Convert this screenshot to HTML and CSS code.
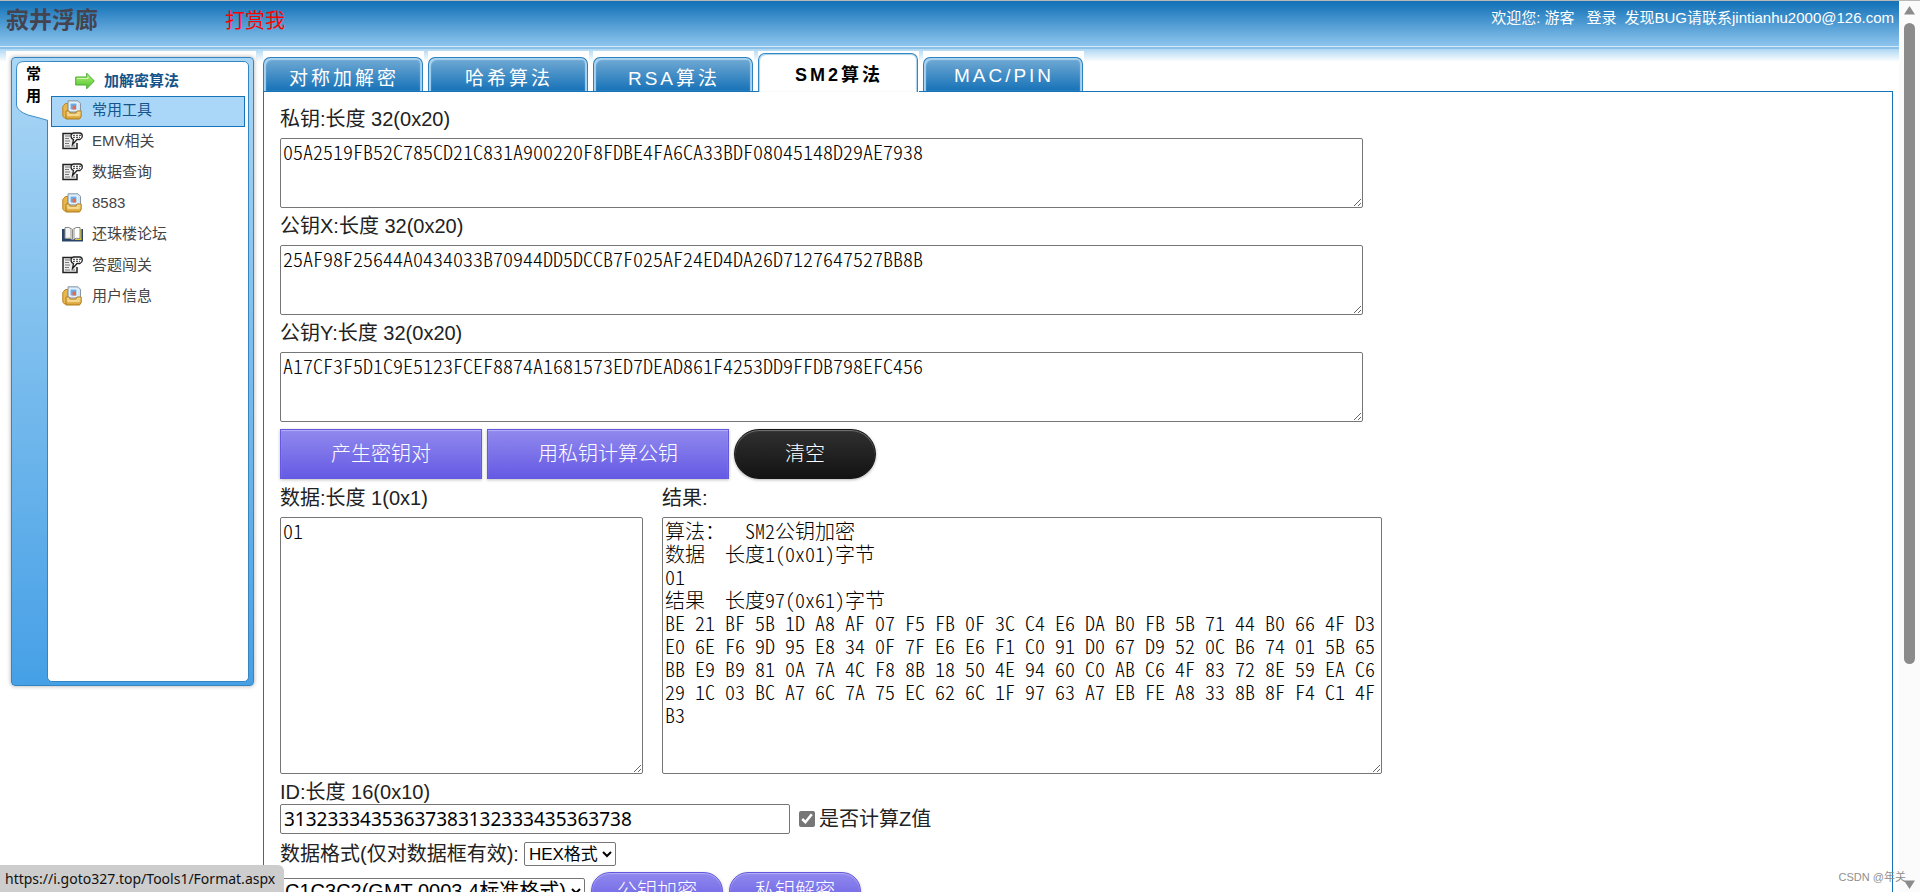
FILE: index.html
```html
<!DOCTYPE html>
<html lang="zh-CN">
<head>
<meta charset="utf-8">
<title>SM2算法</title>
<link rel="stylesheet" href="styles.css">
</head>
<body>
<svg class="defs" width="0" height="0" aria-hidden="true">
  <defs>
    <linearGradient id="gold" x1="0" y1="0" x2="0" y2="1"><stop offset="0" stop-color="#fbe394"/><stop offset="1" stop-color="#d79c2c"/></linearGradient>
    <linearGradient id="green" x1="0" y1="0" x2="0" y2="1"><stop offset="0" stop-color="#b6f07a"/><stop offset="1" stop-color="#4cc42c"/></linearGradient>
  </defs>
  <symbol id="folder" viewBox="0 0 20 20">
    <path d="M.8 6.500l2.500-3H6V18H2.500L.8 16z" fill="#e8b64a" stroke="#b98426"/>
    <path d="M6 .8h10l2.500 2.500V12H6z" fill="#d6e6f4" stroke="#8796a6"/>
    <path d="M8 3h7v7H8z" fill="#5eb0f2" stroke="#f4fafe"/>
    <path d="M10.500 5.500h3.500v4h-3.500z" fill="#ea6a4c"/>
    <path d="M4 11h3l1 2h6l1-2h4.200v5.500L17.500 19H4z" fill="url(#gold)" stroke="#b07c20"/>
    <path d="M5.500 15h12" stroke="#fff2bc"/>
  </symbol>
  <symbol id="note" viewBox="0 0 21 18">
    <path d="M10 1.500H1v15h14V11" fill="#ececec" stroke="#222" stroke-width="1.500"/>
    <path d="M3 4h5M3 6.500h4M3 9h5M3 11.500h4M3 14h5M10 14h3" stroke="#777" fill="none"/>
    <path d="M11.500 1h6.500q2.300.5 2.300 3T18 7.500h-3l-4.500 5 1-5Q9 6.500 9 4t2.500-3z" fill="#fff" stroke="#222" stroke-width="1.300"/>
    <path d="M11 3.300h8M11 5.300h7" stroke="#333" stroke-dasharray="2 1"/>
  </symbol>
  <symbol id="book" viewBox="0 0 21 16">
    <path d="M0 3h3v10h7l1 1 1-1h6V3h3v12.500H0z" fill="#2a4468"/>
    <path d="M18 3h1.500v11H13v-1h5z" fill="#d8c832"/>
    <path d="M3 1.500q4-1 7.500 2v10q-3.500-2-7.500-1z" fill="#f4f4f2" stroke="#888"/>
    <path d="M18 1.500q-4-1-7.500 2v10q3.500-2 7.500-1z" fill="#fff" stroke="#888"/>
    <path d="M9 3v9M12 3v9" stroke="#c8c8c4" stroke-width="2"/>
  </symbol>
  <symbol id="arrow" viewBox="0 0 20 18">
    <path d="M.7 5h11V1.200L19.300 9l-7.600 7.800V13H.7z" fill="url(#green)" stroke="#4cab34"/>
    <path d="M2 6.500h11V4.500" stroke="#d4f8ac" fill="none"/>
  </symbol>
</svg>
<div class="window">
  <div class="page">
    <header class="header">
      <h1 class="brand">寂井浮廊</h1>
      <a class="donate" href="#">打赏我</a>
      <div class="account"><span>欢迎您: 游客</span><a class="login" href="#">登录</a><span>发现BUG请联系jintianhu2000@126.com</span></div>
    </header>
    <div class="content">
      <aside class="side">
        <div class="side-frame">
          <div class="side-tab">
            <svg class="side-shape" width="34" height="60" viewBox="0 0 34 60" aria-hidden="true"><path d="M34 .5H8Q.5.500.500 8v36Q1 50 12 54 24 57 32 59.500L34 59z" fill="#fff"/><path d="M34 .5H8Q.5.500.500 8v36Q1 50 12 54 24 57 32 59.500" fill="none" stroke="#3d8ec8"/></svg>
            <span class="side-label">常<br>用</span>
          </div>
          <nav class="side-panel">
            <h2 class="side-title"><svg width="20" height="18"><use href="#arrow"/></svg>加解密算法</h2>
            <ul class="menu">
              <li><a class="item current" href="#"><svg width="20" height="20"><use href="#folder"/></svg>常用工具</a></li>
              <li><a class="item" href="#"><svg width="21" height="18"><use href="#note"/></svg>EMV相关</a></li>
              <li><a class="item" href="#"><svg width="21" height="18"><use href="#note"/></svg>数据查询</a></li>
              <li><a class="item" href="#"><svg width="20" height="20"><use href="#folder"/></svg>8583</a></li>
              <li><a class="item" href="#"><svg width="21" height="16"><use href="#book"/></svg>还珠楼论坛</a></li>
              <li><a class="item" href="#"><svg width="21" height="18"><use href="#note"/></svg>答题闯关</a></li>
              <li><a class="item" href="#"><svg width="20" height="20"><use href="#folder"/></svg>用户信息</a></li>
            </ul>
          </nav>
        </div>
      </aside>
      <main class="main">
        <div class="tabs">
          <div class="tab-slot"><button class="tab" type="button">对称加解密</button></div>
          <div class="tab-slot"><button class="tab" type="button">哈希算法</button></div>
          <div class="tab-slot"><button class="tab" type="button">RSA算法</button></div>
          <div class="tab-slot active"><button class="tab" type="button">SM2算法</button></div>
          <div class="tab-slot"><button class="tab" type="button">MAC/PIN</button></div>
        </div>
        <form class="panel">
          <label class="label" for="prikey">私钥:长度 32(0x20)</label>
          <textarea class="area key" id="prikey" spellcheck="false">05A2519FB52C785CD21C831A900220F8FDBE4FA6CA33BDF08045148D29AE7938</textarea>
          <label class="label" for="pubx">公钥X:长度 32(0x20)</label>
          <textarea class="area key" id="pubx" spellcheck="false">25AF98F25644A0434033B70944DD5DCCB7F025AF24ED4DA26D7127647527BB8B</textarea>
          <label class="label" for="puby">公钥Y:长度 32(0x20)</label>
          <textarea class="area key" id="puby" spellcheck="false">A17CF3F5D1C9E5123FCEF8874A1681573ED7DEAD861F4253DD9FFDB798EFC456</textarea>
          <div class="actions">
            <button class="btn" type="button">产生密钥对</button>
            <button class="btn" type="button">用私钥计算公钥</button>
            <button class="btn dark" type="button">清空</button>
          </div>
          <div class="columns">
            <div class="col-data">
              <label class="label" for="data">数据:长度 1(0x1)</label>
              <textarea class="area big" id="data" spellcheck="false">01</textarea>
            </div>
            <div class="col-result">
              <label class="label" for="result">结果:</label>
              <textarea class="area big" id="result" spellcheck="false">算法：  SM2公钥加密
数据  长度1(0x01)字节
01
结果  长度97(0x61)字节
BE 21 BF 5B 1D A8 AF 07 F5 FB 0F 3C C4 E6 DA B0 FB 5B 71 44 B0 66 4F D3 E0 6E F6 9D 95 E8 34 0F 7F E6 E6 F1 C0 91 D0 67 D9 52 0C B6 74 01 5B 65 BB E9 B9 81 0A 7A 4C F8 8B 18 50 4E 94 60 C0 AB C6 4F 83 72 8E 59 EA C6 29 1C 03 BC A7 6C 7A 75 EC 62 6C 1F 97 63 A7 EB FE A8 33 8B 8F F4 C1 4F B3</textarea>
            </div>
          </div>
          <label class="label id-label" for="uid">ID:长度 16(0x10)</label>
          <div class="id-row">
            <input class="text" id="uid" type="text" value="31323334353637383132333435363738">
            <input class="check" id="zval" type="checkbox" checked>
            <label for="zval">是否计算Z值</label>
          </div>
          <div class="format-row">
            <label for="fmt">数据格式(仅对数据框有效):</label>
            <select class="fmt" id="fmt"><option>HEX格式</option></select>
          </div>
          <div class="crypt-row">
            <select class="order" aria-label="密文格式"><option>C1C3C2(GMT 0003.4标准格式)</option></select>
            <button class="btn pill" type="button">公钥加密</button>
            <button class="btn pill" type="button">私钥解密</button>
          </div>
        </form>
      </main>
    </div>
  </div>
  <div class="scrollbar" aria-hidden="true">
    <svg width="11" height="9" viewBox="0 0 11 9"><path d="M5.500 0 11 8.500H0z" fill="#8b8b8b"/></svg>
    <div class="track"><div class="thumb"></div></div>
    <svg width="11" height="9" viewBox="0 0 11 9"><path d="M5.500 9 11 .5H0z" fill="#8b8b8b"/></svg>
  </div>
  <div class="status">https://i.goto327.top/Tools1/Format.aspx</div>
  <div class="mark">CSDN @年关</div>
</div>
</body>
</html>
```
FILE: styles.css
```css
* { box-sizing: border-box; }
body {
  margin: 0;
  font-family: "Liberation Sans", "Noto Sans CJK SC", sans-serif;
  font-size: 20px;
  line-height: 24px;
  color: #222;
  background: #fff;
}
a { color: inherit; text-decoration: none; }
svg { display: block; flex: none; }
.defs { position: absolute; }

.window { position: relative; display: flex; height: 100vh; overflow: hidden; border-top: 1px solid #b8b8b8; }
.page { flex: 1; min-width: 0; }

.header {
  display: flex;
  height: 48px;
  padding: 0 5px 0 6px;
  background: linear-gradient(#1672b8, #1d79bc 5px, #8ec5ee 45px, #cfe8fa 45px, #cfe8fa 46px, #8ac0e6 46px);
}
.brand { margin: 3px 0 0; width: 219px; font-size: 23px; line-height: 32px; color: #444450; }
.donate { margin-top: 8px; color: #f00; }
.account { display: flex; gap: 8px; margin: 5px 0 0 auto; font-size: 15px; color: #fff; }
.login { margin-left: 4px; }

.content {
  display: flex;
  gap: 7px;
  padding: 2px 6px 0;
  background: linear-gradient(#aed7f3, #fff 13px);
}
.side { flex: none; width: 250px; padding: 6px 2px 8px 5px; background: #fff; }
.side-frame {
  display: flex;
  height: 629px;
  padding: 3px 4px;
  border: 1px solid #3585c0;
  border-radius: 4px;
  background: linear-gradient(#abd7f5, #46a0e6);
  box-shadow: 0 0 4px #aaa;
}
.side-tab { position: relative; width: 31px; z-index: 1; }
.side-shape { position: absolute; left: 0; top: 0; }
.side-label { position: relative; display: block; padding: 2px 0 0 10px; width: 28px; font-size: 15px; font-weight: bold; line-height: 22px; color: #000; }
.side-panel { flex: 1; padding: 0 3px; border: 1px solid #3585c0; border-radius: 0 5px 5px 5px; background: #fff; }
.side-title { display: flex; align-items: center; gap: 9px; height: 34px; margin: 0; padding: 3px 0 0 24px; font-size: 15px; color: #15548a; }
.menu { margin: 0; padding: 0; list-style: none; }
.item { display: flex; align-items: center; height: 31px; padding: 0 0 3px 10px; border: 1px solid transparent; font-size: 15px; color: #444; }
.item svg { margin-right: 10px; }
.item svg[width="21"] { margin-right: 9px; }
.current { border-color: #1874b9; background: #aad7f7; color: #15548a; }

.main { flex: 1; min-width: 0; }
.tabs { display: flex; gap: 4px; height: 40px; }
.tab-slot { width: 161px; padding-top: 6px; background: #fff; }
.tab {
  width: 160px;
  height: 34px;
  padding: 3px 0 0 2px;
  border: 1px solid #2f81bd;
  border-bottom: 0;
  border-radius: 7px 7px 0 0;
  background: linear-gradient(#73abd4, #1672b8);
  box-shadow: inset 2px 2px 1px #a9d3f0, inset -2px 0 1px #a9d3f0;
  font-family: inherit;
  font-size: 19px;
  letter-spacing: 3px;
  color: #fff;
}
.active { position: relative; z-index: 1; height: 41px; padding-top: 2px; }
.active .tab { height: 39px; padding-top: 0; border-color: #3585c0; background: #fff; box-shadow: inset 1px 1px 1px #a9d3f0, inset -1px 0 1px #a9d3f0; font-size: 18px; font-weight: bold; color: #000; }

.panel { padding: 9px 16px 60px; border: 1px solid #1874b9; }
.label { display: block; line-height: 37px; }
.area {
  display: block;
  width: 100%;
  padding: 1px 2px;
  border: 1px solid #767676;
  border-radius: 2px;
  background: #fff;
  color: #000;
  font-family: "Noto Sans CJK SC", sans-serif;
  font-feature-settings: "hwid";
  font-weight: 300;
  font-size: 20px;
  line-height: 23px;
}
.key { max-width: 1083px; height: 70px; }
.big { height: 257px; }
.actions { display: flex; gap: 5px; margin: 7px 0 1px; }
.btn {
  height: 50px;
  padding: 0 50px 3px;
  border: 1px solid #6459de;
  background: linear-gradient(#9189ee, #655ae4);
  box-shadow: inset 0 1px 1px #b6b0f5, 0 1px 3px rgba(0, 0, 0, .25);
  font-family: inherit;
  font-size: 20px;
  font-weight: 300;
  color: #fff;
}
.dark { border-color: #151515; border-radius: 25px; background: linear-gradient(#303030, #131313); box-shadow: inset 0 1px 1px #777, 0 1px 3px rgba(0, 0, 0, .3); }
.columns { display: flex; gap: 19px; max-width: 1102px; }
.col-data { width: 363px; }
.col-result { width: 720px; }
.id-label { padding-top: 6px; line-height: 24px; }
.id-row { display: flex; align-items: center; }
.text { width: 510px; height: 30px; padding: 0 3px; border: 1px solid #767676; border-radius: 2px; font-family: "Noto Sans", sans-serif; font-size: 19px; color: #000; }
.check { width: 16px; height: 16px; margin: 0 4px 0 9px; accent-color: #767676; }
.format-row { display: flex; align-items: center; gap: 5px; margin-top: 8px; }
select { border: 1px solid #767676; border-radius: 2px; background: #fff; color: #000; font-family: inherit; }
.fmt { width: 92px; height: 24px; font-size: 17px; }
.crypt-row { display: flex; align-items: center; gap: 6px; margin-top: 6px; }
.order { width: 305px; height: 26px; font-size: 20px; }
.pill { height: 38px; padding: 0 25px 3px; border-radius: 20px; }

.scrollbar { display: flex; flex-direction: column; align-items: center; width: 21px; padding: 5px 0 3px; background: #fbfbfb; }
.track { flex: 1; padding: 8px 0; }
.thumb { width: 11px; height: 75.5%; border-radius: 6px; background: #8b8b8b; }
.status { position: absolute; left: 0; bottom: 0; z-index: 2; padding: 2px 9px 1px 5px; border-radius: 0 6px 0 0; background: #cdcdcd; font-family: "Noto Sans", sans-serif; font-size: 14px; color: #111; }
.mark { position: absolute; right: 14px; bottom: 3px; font-size: 11px; color: #8f8f8f; }
```
